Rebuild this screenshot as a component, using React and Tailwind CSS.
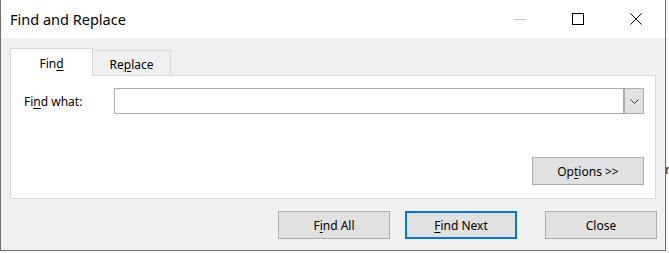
import { clsx } from 'clsx'

const font = { fontFamily: '"Noto Sans", "Open Sans", sans-serif' }

function Key({ children }) {
  return <u className="underline decoration-1 underline-offset-[2px]">{children}</u>
}

function Button({ children, primary = false, className = '' }) {
  return (
    <button
      type="button"
      className={clsx(
        'flex h-[28px] w-[112px] items-center justify-center bg-[#e1e1e1] pt-px text-[12px] text-black',
        primary ? 'border-2 border-[#0078d7]' : 'border border-[#adadad]',
        className
      )}
    >
      {children}
    </button>
  )
}

function TitleBar() {
  return (
    <div className="flex h-[38px] shrink-0 items-center bg-white">
      <span className="pl-[9px] pt-[2px] text-[14.5px] text-black">Find and Replace</span>
      <div className="ml-auto flex items-center">
        {/* minimize (disabled) */}
        <div className="flex h-[38px] w-[58px] items-center justify-center">
          <div className="mt-[1px] h-px w-[12px] bg-[#c8c8c8]" />
        </div>
        {/* maximize */}
        <div className="flex h-[38px] w-[58px] items-center justify-center">
          <div className="h-[12px] w-[12px] border border-black" />
        </div>
        {/* close */}
        <div className="flex h-[38px] w-[58px] items-center justify-center">
          <svg width="12" height="12" viewBox="0 0 12 12" aria-hidden>
            <path d="M0.5 0.5 L11.5 11.5 M11.5 0.5 L0.5 11.5" stroke="black" strokeWidth="1" fill="none" />
          </svg>
        </div>
      </div>
    </div>
  )
}

function Tabs() {
  return (
    <div className="flex h-[27px] items-end">
      <div className="relative z-10 -mb-px flex h-[28px] w-[83px] items-center justify-center border border-b-0 border-[#d9d9d9] bg-white pt-[2px] text-[12px]">
        Fin<Key>d</Key>
      </div>
      <div className="flex h-[25px] w-[78px] items-center justify-center border border-b-0 border-l-0 border-[#d9d9d9] bg-[#f0f0f0] pt-[3px] text-[12px]">
        Re<Key>p</Key>lace
      </div>
    </div>
  )
}

function FindPanel() {
  return (
    <div className="mr-[9px] flex h-[124px] flex-col border border-[#d9d9d9] bg-white pl-[13px] pr-[11px] pt-[12px]">
      <div className="flex items-center">
        <label className="w-[90px] pt-px text-[12px]">
          Fi<Key>n</Key>d what:
        </label>
        <div className="flex h-[26px] flex-1 border border-[#adadad] bg-white">
          <div className="flex-1" />
          <div className="flex w-[20px] items-center justify-center border-2 border-r-0 border-y-0 border-[#adadad] bg-[#e1e1e1]">
            <svg width="9" height="5" viewBox="0 0 9 5" aria-hidden>
              <path d="M0.5 0.5 L4.5 4.5 L8.5 0.5" stroke="#3c3c3c" strokeWidth="1" fill="none" />
            </svg>
          </div>
        </div>
      </div>
      <div className="mt-[43px] flex justify-end">
        <Button>
          Op<Key>t</Key>ions &gt;&gt;
        </Button>
      </div>
    </div>
  )
}

export default function App() {
  return (
    <div className="relative h-[253px] w-[669px] overflow-hidden bg-[#f7f7f7]" style={font}>
      {/* bits of the window behind */}
      <div className="absolute left-[78px] top-0 h-[3px] w-px bg-[#555]" />
      <span className="absolute left-[665px] top-[160px] text-[13px] text-[#222]">r</span>

      <div className="relative flex h-[251px] w-[666px] flex-col border border-t-0 border-[#6e6e6e] bg-[#f0f0f0] text-black">
        <TitleBar />
        <div className="flex flex-1 flex-col pl-[9px] pt-[10px]">
          <Tabs />
          <FindPanel />
          <div className="mt-[12px] flex pr-[8px]">
            <div className="ml-auto flex">
              <Button>
                F<Key>i</Key>nd All
              </Button>
              <Button primary className="ml-[15px]">
                <Key>F</Key>ind Next
              </Button>
              <Button className="ml-[28px]">Close</Button>
            </div>
          </div>
        </div>
      </div>
    </div>
  )
}
